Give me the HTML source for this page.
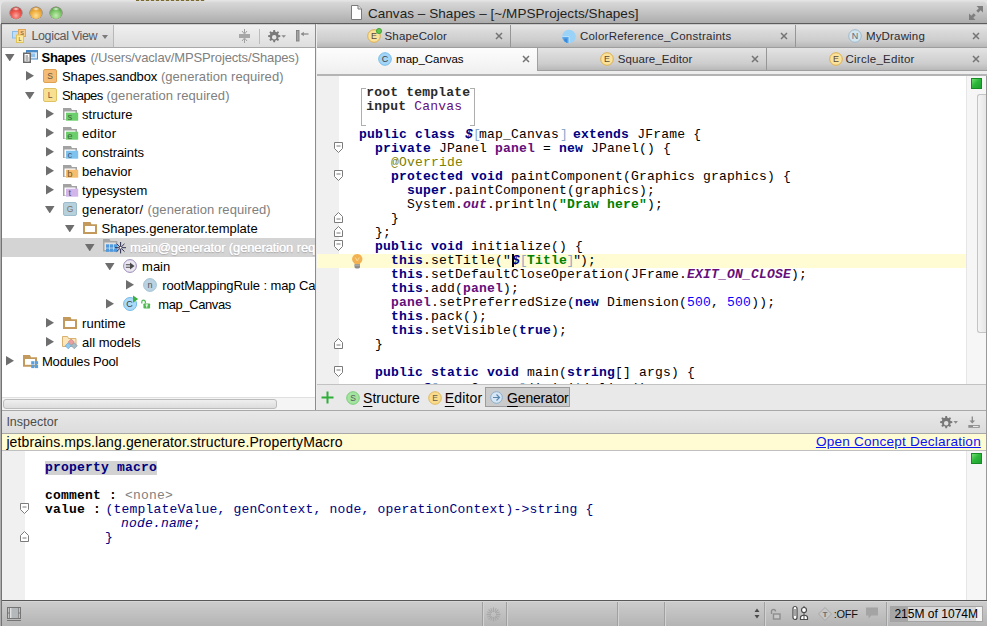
<!DOCTYPE html><html><head><meta charset="utf-8"><title>Canvas - Shapes</title><style>
*{box-sizing:border-box;margin:0;padding:0}
html,body{width:987px;height:626px;overflow:hidden;background:#fff}
body{position:relative;font-family:"Liberation Sans",sans-serif;font-size:13px;color:#000}
.abs{position:absolute}
.t{position:absolute;white-space:nowrap;line-height:1}
.g{color:#808080}
.code{font-family:"Liberation Mono",monospace;font-size:13px;letter-spacing:0.2px;white-space:pre;line-height:14px;position:absolute}
.k{font-weight:bold;color:#000080}
.f{font-weight:bold;color:#660e7a}
.sf{font-weight:bold;font-style:italic;color:#660e7a}
.an{color:#808000}
.s{font-weight:bold;color:#008000}
.n{color:#0000ff}
.b{font-weight:bold}
.m{font-weight:bold;font-style:italic;color:#000080}
.br{color:#8aa9c9}
.db{color:#000080}
u{text-underline-offset:2.500px;text-decoration-thickness:1px}
</style></head><body>
<div class="abs" style="left:0px;top:0px;width:987px;height:626px;background:#e4e4e4"></div>
<div class="abs" style="left:1px;top:1px;width:986px;height:23px;background:linear-gradient(#e2e2e2 0,#d6d6d6 8%,#c4c4c4 50%,#acacac 100%);border-radius:5px 5px 0 0;border-bottom:1px solid #5c5c5c"></div>
<div class="abs" style="left:0px;top:24px;width:1px;height:602px;background:#aeaeae"></div>
<div class="abs" style="left:1px;top:24px;width:1px;height:602px;background:#747474"></div>
<div class="abs" style="left:10px;top:7px;width:12px;height:12px;border-radius:50%;background:radial-gradient(ellipse 3.500px 1.800px at 50% 16%,rgba(255,255,255,.85),rgba(255,255,255,0)),radial-gradient(circle at 50% 72%,#f8a8a4 0,#ee5a50 42%,#d2423a 72%,#7e2a1c 100%);box-shadow:0 0 0 .5px rgba(60,30,20,.55),0 1px 0 rgba(255,255,255,.45)"></div>
<div class="abs" style="left:30px;top:7px;width:12px;height:12px;border-radius:50%;background:radial-gradient(ellipse 3.500px 1.800px at 50% 16%,rgba(255,255,255,.85),rgba(255,255,255,0)),radial-gradient(circle at 50% 72%,#fbe09a 0,#f2b244 42%,#d8962a 72%,#86581a 100%);box-shadow:0 0 0 .5px rgba(60,30,20,.55),0 1px 0 rgba(255,255,255,.45)"></div>
<div class="abs" style="left:50px;top:7px;width:12px;height:12px;border-radius:50%;background:radial-gradient(ellipse 3.500px 1.800px at 50% 16%,rgba(255,255,255,.85),rgba(255,255,255,0)),radial-gradient(circle at 50% 72%,#c4ecb4 0,#84cc70 42%,#5ca84a 72%,#2c6224 100%);box-shadow:0 0 0 .5px rgba(60,30,20,.55),0 1px 0 rgba(255,255,255,.45)"></div>
<div class="abs" style="left:136px;top:0px;width:69px;height:1px;background:repeating-linear-gradient(90deg,#7a6a30 0,#7a6a30 3px,#d0ccc0 3px,#d0ccc0 5px)"></div>
<svg class="abs" style="left:350px;top:5px" width="13" height="15" viewBox="0 0 13 15"><path d="M1.500 .5h6.500l3.500 3.500v10.500h-10z" fill="#fff" stroke="#7a7a7a"/><path d="M8 .5v3.500h3.500" fill="#e8e8e8" stroke="#7a7a7a"/></svg>
<span class="t " style="left:367.9px;top:6.6px;font-size:13.5px;font-weight:normal;color:#1e1e1e;letter-spacing:0.06px;">Canvas – Shapes – [~/MPSProjects/Shapes]</span>
<svg class="abs" style="left:969px;top:6px" width="14" height="14" viewBox="0 0 14 14"><g fill="#7e7e7e"><path d="M7.500 0h6.500v6.500l-2.300-2.300-2.500 2.500-1.900-1.900 2.500-2.500z"/><path d="M6.500 14h-6.500v-6.500l2.300 2.300 2.500-2.500 1.900 1.900-2.500 2.500z"/></g></svg>
<div class="abs" style="left:2px;top:24px;width:314px;height:24px;background:linear-gradient(#b4b4b4 0,#f0f0f0 1px,#efefef 2px,#dedede);border-bottom:1px solid #a8a8a8"></div>
<div class="abs" style="left:2px;top:25px;width:112px;height:22px;background:linear-gradient(#e8e8e8,#d4d4d4);border-right:1px solid #b8b8b8"></div>
<svg class="abs" style="left:12px;top:29px" width="14" height="14" viewBox="0 0 14 14"><rect x=".5" y="2.500" width="6" height="6.500" fill="#c2dcf6" stroke="#8abcea"/><rect x="6.500" y=".5" width="7" height="7" fill="#f8ca8c" stroke="#e0a654"/><rect x="4.500" y="6" width="7" height="7.500" fill="#fbe9a2" stroke="#e0c458"/><text x="10" y="6.300" font-size="5.500" font-family="Liberation Sans, sans-serif" text-anchor="middle" fill="#6a5a30">S</text><text x="8" y="12.300" font-size="5.500" font-family="Liberation Sans, sans-serif" text-anchor="middle" fill="#6a5a30">L</text></svg>
<span class="t " style="left:31.4px;top:30px;font-size:12.5px;font-weight:normal;color:#58585e;letter-spacing:-0.346px;">Logical View</span>
<div class="abs" style="left:102px;top:35px;width:0;height:0;border-left:3px solid transparent;border-right:3px solid transparent;border-top:4px solid #7a7a7a"></div>
<svg class="abs" style="left:239px;top:29px" width="11" height="14" viewBox="0 0 11 14"><rect x="0" y="5" width="11" height="4" fill="#a6a6a6"/><path d="M5.500 0v4M5.500 10v4" stroke="#a0a0a0" stroke-width="1"/><path d="M3 2l2.500 3 2.500-3M3 12l2.500-3 2.500 3" stroke="#a0a0a0" stroke-width="1" fill="none"/></svg>
<div class="abs" style="left:259px;top:29px;width:1px;height:15px;background:#bcbcbc"></div>
<svg class="abs" style="left:267px;top:30px" width="20" height="12.5" viewBox="0 0 20 12.5"><g transform="scale(1.03)"><path d="M6.200 0h1.600l.3 1.700 1.100.45 1.400-1 1.150 1.150-1 1.400.45 1.100 1.700.3v1.600l-1.700.3-.45 1.100 1 1.400-1.150 1.150-1.400-1-1.100.45-.3 1.700h-1.600l-.3-1.700-1.100-.45-1.400 1-1.150-1.150 1-1.400-.45-1.100-1.700-.3v-1.600l1.700-.3.450-1.100-1-1.400 1.150-1.150 1.400 1 1.100-.45zM7 4.800a2.200 2.200 0 1 0 0 4.400 2.200 2.200 0 0 0 0-4.400z" fill="#7a7a7a" fill-rule="evenodd"/></g><path d="M14.400 5.200h4.600l-2.300 2.600z" fill="#8a8a8a"/></svg>
<svg class="abs" style="left:295.5px;top:30px" width="13" height="12" viewBox="0 0 13 12"><rect x=".5" y=".5" width="2.500" height="10.500" fill="#a4a4a4" stroke="#7e7e7e" stroke-width=".9"/><path d="M5.500 4h7" stroke="#8a8a8a" stroke-width="1.300"/><path d="M4.800 4l3-2.300v4.600z" fill="#8a8a8a"/></svg>
<div class="abs" style="left:2px;top:48px;width:313px;height:349px;background:#fff;overflow:hidden">
<div class="abs" style="left:0;top:190px;width:313px;height:19px;background:#d4d4d4"></div>
<svg class="abs" style="left:3.0500000000000007px;top:5.5px" width="9.500" height="7.500" viewBox="0 0 9.500 7.500"><path d="M0 0h9.500l-4.750 7.500z" fill="#6e6e6e"/></svg>
<svg class="abs" style="left:21px;top:2.0px" width="15" height="13" viewBox="0 0 15 13"><rect x="3.500" y=".5" width="11" height="8.500" fill="#d6e8f8" stroke="#4a8ac8"/><rect x="3.500" y=".5" width="11" height="1.800" fill="#4a8ac8"/><rect x="7.500" y="3.500" width="4.500" height="3.500" fill="#8ec2f0"/><rect x="0" y="2.500" width="8" height="10.500" fill="#6a6a6a"/><rect x="1.500" y="4" width="5" height="7.500" fill="#fff"/><path d="M2.500 6h2.500M2.500 8h3M2.500 10h3" stroke="#6a6a6a"/></svg>
<span class="t " style="left:39.6px;top:3px;font-size:13px;font-weight:bold;color:#000;letter-spacing:-0.375px;">Shapes</span>
<span class="t " style="left:88.4px;top:3px;font-size:13px;font-weight:normal;color:#808080;letter-spacing:-0.136px;">(/Users/vaclav/MPSProjects/Shapes)</span>
<svg class="abs" style="left:24px;top:23.25px" width="8" height="9.500" viewBox="0 0 8 9.500"><path d="M0 0v9.500l8-4.750z" fill="#6e6e6e"/></svg>
<svg class="abs" style="left:41px;top:21.0px" width="14" height="14" viewBox="0 0 14 14"><rect x=".5" y=".5" width="13" height="13" rx="1.500" fill="#f4bc74" stroke="#e0a252"/><text x="7" y="10" font-size="8.500" font-family="Liberation Sans, sans-serif" text-anchor="middle" fill="#6a5a40">S</text></svg>
<span class="t " style="left:60.0px;top:22px;font-size:13px;font-weight:normal;color:#000;letter-spacing:-0.119px;">Shapes.sandbox</span>
<span class="t " style="left:158.9px;top:22px;font-size:13px;font-weight:normal;color:#808080;letter-spacing:0.062px;">(generation required)</span>
<svg class="abs" style="left:23.05px;top:43.5px" width="9.500" height="7.500" viewBox="0 0 9.500 7.500"><path d="M0 0h9.500l-4.750 7.500z" fill="#6e6e6e"/></svg>
<svg class="abs" style="left:41px;top:40.0px" width="14" height="14" viewBox="0 0 14 14"><rect x=".5" y=".5" width="13" height="13" rx="1.500" fill="#f8e092" stroke="#e0c262"/><text x="7" y="10" font-size="8.500" font-family="Liberation Sans, sans-serif" text-anchor="middle" fill="#6a5a40">L</text></svg>
<span class="t " style="left:60.0px;top:41px;font-size:13px;font-weight:normal;color:#000;letter-spacing:-0.582px;">Shapes</span>
<span class="t " style="left:104.4px;top:41px;font-size:13px;font-weight:normal;color:#808080;letter-spacing:0.085px;">(generation required)</span>
<svg class="abs" style="left:44.1px;top:61.25px" width="8" height="9.500" viewBox="0 0 8 9.500"><path d="M0 0v9.500l8-4.750z" fill="#6e6e6e"/></svg>
<svg class="abs" style="left:61px;top:59.7px" width="16" height="13" viewBox="0 0 16 13"><path d="M0 0h8l1 2h5v10h-14z" fill="#a2a2a2"/><rect x="1.500" y="3.500" width="11" height="8" fill="#fff"/><rect x="3" y="4.700" width="12.200" height="8" fill="#6ccf6c"/><text x="6.800" y="12" font-size="9.500" font-family="Liberation Sans, sans-serif" text-anchor="middle" fill="#3c6a3c">s</text></svg>
<span class="t " style="left:80.1px;top:60px;font-size:13px;font-weight:normal;color:#000;letter-spacing:-0.009px;">structure</span>
<svg class="abs" style="left:44.1px;top:80.25px" width="8" height="9.500" viewBox="0 0 8 9.500"><path d="M0 0v9.500l8-4.750z" fill="#6e6e6e"/></svg>
<svg class="abs" style="left:61px;top:78.7px" width="16" height="13" viewBox="0 0 16 13"><path d="M0 0h8l1 2h5v10h-14z" fill="#a2a2a2"/><rect x="1.500" y="3.500" width="11" height="8" fill="#fff"/><rect x="3" y="4.700" width="12.200" height="8" fill="#6ccf6c"/><text x="6.800" y="12" font-size="9.500" font-family="Liberation Sans, sans-serif" text-anchor="middle" fill="#3c6a3c">e</text></svg>
<span class="t " style="left:80.1px;top:79px;font-size:13px;font-weight:normal;color:#000;letter-spacing:0.295px;">editor</span>
<svg class="abs" style="left:44.1px;top:99.25px" width="8" height="9.500" viewBox="0 0 8 9.500"><path d="M0 0v9.500l8-4.750z" fill="#6e6e6e"/></svg>
<svg class="abs" style="left:61px;top:97.7px" width="16" height="13" viewBox="0 0 16 13"><path d="M0 0h8l1 2h5v10h-14z" fill="#a2a2a2"/><rect x="1.500" y="3.500" width="11" height="8" fill="#fff"/><rect x="3" y="4.700" width="12.200" height="8" fill="#80c2ee"/><text x="6.800" y="12" font-size="9.500" font-family="Liberation Sans, sans-serif" text-anchor="middle" fill="#3a5a7a">c</text></svg>
<span class="t " style="left:80.1px;top:98px;font-size:13px;font-weight:normal;color:#000;letter-spacing:-0.098px;">constraints</span>
<svg class="abs" style="left:44.1px;top:118.25px" width="8" height="9.500" viewBox="0 0 8 9.500"><path d="M0 0v9.500l8-4.750z" fill="#6e6e6e"/></svg>
<svg class="abs" style="left:61px;top:116.7px" width="16" height="13" viewBox="0 0 16 13"><path d="M0 0h8l1 2h5v10h-14z" fill="#a2a2a2"/><rect x="1.500" y="3.500" width="11" height="8" fill="#fff"/><rect x="3" y="4.700" width="12.200" height="8" fill="#f6be6c"/><text x="6.800" y="12" font-size="9.500" font-family="Liberation Sans, sans-serif" text-anchor="middle" fill="#7a5a2c">b</text></svg>
<span class="t " style="left:80.1px;top:117px;font-size:13px;font-weight:normal;color:#000;letter-spacing:-0.009px;">behavior</span>
<svg class="abs" style="left:44.1px;top:137.25px" width="8" height="9.500" viewBox="0 0 8 9.500"><path d="M0 0v9.500l8-4.750z" fill="#6e6e6e"/></svg>
<svg class="abs" style="left:61px;top:135.7px" width="16" height="13" viewBox="0 0 16 13"><path d="M0 0h8l1 2h5v10h-14z" fill="#a2a2a2"/><rect x="1.500" y="3.500" width="11" height="8" fill="#fff"/><rect x="3" y="4.700" width="12.200" height="8" fill="#d2b6ea"/><text x="6.800" y="12" font-size="9.500" font-family="Liberation Sans, sans-serif" text-anchor="middle" fill="#5a4a7a">t</text></svg>
<span class="t " style="left:80.1px;top:136px;font-size:13px;font-weight:normal;color:#000;letter-spacing:-0.065px;">typesystem</span>
<svg class="abs" style="left:43.45px;top:157.5px" width="9.500" height="7.500" viewBox="0 0 9.500 7.500"><path d="M0 0h9.500l-4.750 7.500z" fill="#6e6e6e"/></svg>
<svg class="abs" style="left:61px;top:154.0px" width="14" height="14" viewBox="0 0 14 14"><rect x=".5" y=".5" width="13" height="13" rx="1.500" fill="#b6d0dc" stroke="#9cbccc"/><text x="7" y="10" font-size="8.500" font-family="Liberation Sans, sans-serif" text-anchor="middle" fill="#7a7068">G</text></svg>
<span class="t " style="left:80.1px;top:155px;font-size:13px;font-weight:normal;color:#000;letter-spacing:0.193px;">generator/</span>
<span class="t " style="left:145.6px;top:155px;font-size:13px;font-weight:normal;color:#808080;letter-spacing:0.081px;">(generation required)</span>
<svg class="abs" style="left:63.05px;top:176.5px" width="9.500" height="7.500" viewBox="0 0 9.500 7.500"><path d="M0 0h9.500l-4.750 7.500z" fill="#6e6e6e"/></svg>
<svg class="abs" style="left:81px;top:174.0px" width="14" height="12" viewBox="0 0 14 12"><path d="M0 0h7.500l1 2.200h5.500v9.800h-14z" fill="#c49a5c"/><rect x="2" y="4" width="10" height="6" fill="#fff"/></svg>
<span class="t " style="left:99.5px;top:174px;font-size:13px;font-weight:normal;color:#000;letter-spacing:0.004px;">Shapes.generator.template</span>
<svg class="abs" style="left:83.25px;top:195.5px" width="9.500" height="7.500" viewBox="0 0 9.500 7.500"><path d="M0 0h9.500l-4.750 7.500z" fill="#6e6e6e"/></svg>
<svg class="abs" style="left:101px;top:191.0px" width="23" height="15" viewBox="0 0 23 15"><path d="M0 0h6.500l1 2h6.800v10.500h-14.300z" fill="#a6a6a6"/><rect x="1.500" y="3.500" width="11.300" height="7.500" fill="#e2e2e2"/><g fill="#4f9ade"><rect x="3" y="5.300" width="3.300" height="3.400"/><rect x="7" y="5.300" width="3.300" height="3.400"/><rect x="11" y="5.300" width="3.300" height="3.400"/><rect x="3" y="9.400" width="3.300" height="3.400"/><rect x="7" y="9.400" width="3.300" height="3.400"/><rect x="11" y="9.400" width="3.300" height="3.400"/></g><g stroke="#1c1c44" stroke-width=".9"><path d="M17.600 3v11.400M12 8.700h11.200M13.700 4.800l7.800 7.800M21.500 4.800l-7.800 7.800"/></g><circle cx="17.600" cy="8.700" r="1" fill="#fff"/></svg>
<span class="t " style="left:128.1px;top:193px;font-size:13px;font-weight:normal;color:#fff;letter-spacing:-0.126px;text-shadow:0 0 .7px #fff,0 1px 1px rgba(120,120,120,.5);">main@generator (generation required)</span>
<svg class="abs" style="left:103.05px;top:214.5px" width="9.500" height="7.500" viewBox="0 0 9.500 7.500"><path d="M0 0h9.500l-4.750 7.500z" fill="#6e6e6e"/></svg>
<svg class="abs" style="left:121px;top:211.2px" width="14" height="14" viewBox="0 0 14 14"><circle cx="7" cy="7" r="6.400" fill="#ebe8f2" stroke="#9a8aba"/><path d="M2.800 5.700h5M2.800 8.300h5" stroke="#4a4a4a" stroke-width="1.100" fill="none"/><path d="M7 3.500l4.500 3.500-4.500 3.500z" fill="#4a4a4a"/></svg>
<span class="t " style="left:140.1px;top:212px;font-size:13px;font-weight:normal;color:#000;letter-spacing:-0.022px;">main</span>
<svg class="abs" style="left:124.1px;top:232.25px" width="8" height="9.500" viewBox="0 0 8 9.500"><path d="M0 0v9.500l8-4.750z" fill="#6e6e6e"/></svg>
<svg class="abs" style="left:141px;top:230.0px" width="14" height="14" viewBox="0 0 14 14"><circle cx="7" cy="7" r="6.400" fill="#bad2e2" stroke="#a2c2d6"/><text x="7" y="9.800" font-size="9" font-family="Liberation Sans, sans-serif" text-anchor="middle" fill="#555">n</text></svg>
<span class="t " style="left:160.2px;top:231px;font-size:13px;font-weight:normal;color:#000;letter-spacing:-0.087px;">rootMappingRule : map Canvas</span>
<svg class="abs" style="left:104px;top:251.25px" width="8" height="9.500" viewBox="0 0 8 9.500"><path d="M0 0v9.500l8-4.750z" fill="#6e6e6e"/></svg>
<svg class="abs" style="left:121px;top:247.0px" width="28" height="16" viewBox="0 0 28 16"><circle cx="7.100" cy="9" r="6.500" fill="#aadaf8" stroke="#72bae8"/><text x="6.500" y="12" font-size="9" font-family="Liberation Sans, sans-serif" text-anchor="middle" fill="#404040">C</text><path d="M10 .5v7.200l5.200-3.600z" fill="#3cb03c"/><rect x="20.400" y="8.400" width="6.700" height="5.200" rx=".8" fill="#52b852"/><path d="M23.750 9.600v3M22.500 10h2.500" stroke="#fff" stroke-width="1"/><path d="M18.800 8.500v-1.500a1.800 1.800 0 0 1 3.600 0v1.500" fill="none" stroke="#52b852" stroke-width="1.200"/></svg>
<span class="t " style="left:156.3px;top:250px;font-size:13px;font-weight:normal;color:#000;letter-spacing:-0.411px;">map_Canvas</span>
<svg class="abs" style="left:44.1px;top:270.25px" width="8" height="9.500" viewBox="0 0 8 9.500"><path d="M0 0v9.500l8-4.750z" fill="#6e6e6e"/></svg>
<svg class="abs" style="left:61px;top:269.0px" width="14" height="12" viewBox="0 0 14 12"><path d="M0 0h7.500l1 2.200h5.500v9.800h-14z" fill="#c49a5c"/><rect x="2" y="4" width="10" height="6" fill="#fff"/></svg>
<span class="t " style="left:80.1px;top:269px;font-size:13px;font-weight:normal;color:#000;letter-spacing:-0.008px;">runtime</span>
<svg class="abs" style="left:44.1px;top:289.25px" width="8" height="9.500" viewBox="0 0 8 9.500"><path d="M0 0v9.500l8-4.750z" fill="#6e6e6e"/></svg>
<svg class="abs" style="left:60.3px;top:287.5px" width="16" height="14" viewBox="0 0 16 14"><path d="M.5 10.500v-10h5l1 2h7.500v8z" fill="#fbe6bc" stroke="#d8b070"/><path d="M9.200 3l3 3-3 3-3-3z" fill="#e8a0a0" stroke="#c07878" stroke-width=".6"/><path d="M6.200 6.800l3 3-3 3-3-3z" fill="#8ccaf0" stroke="#5a9ad0" stroke-width=".6"/><path d="M12.300 6.800l3 3-3 3-3-3z" fill="#a8bcc8" stroke="#7890a0" stroke-width=".6"/></svg>
<span class="t " style="left:80.1px;top:288px;font-size:13px;font-weight:normal;color:#000;letter-spacing:-0.003px;">all models</span>
<svg class="abs" style="left:4.199999999999999px;top:308.25px" width="8" height="9.500" viewBox="0 0 8 9.500"><path d="M0 0v9.500l8-4.750z" fill="#6e6e6e"/></svg>
<svg class="abs" style="left:21px;top:306.8px" width="16" height="14" viewBox="0 0 16 14"><path d="M0 0h7l1 2.200h6v9.600h-14z" fill="#c49a5c"/><rect x="2" y="4" width="10" height="5.800" fill="#fff"/><g fill="#5aa0dc"><rect x="8.200" y="6.200" width="3.200" height="3.200"/><rect x="11.900" y="6.200" width="3.200" height="3.200"/><rect x="8.200" y="9.900" width="3.200" height="3.200"/><rect x="11.900" y="9.900" width="3.200" height="3.200"/></g></svg>
<span class="t " style="left:40.0px;top:307px;font-size:13px;font-weight:normal;color:#000;letter-spacing:-0.207px;">Modules Pool</span>
</div>
<div class="abs" style="left:2px;top:397px;width:313px;height:13px;background:#f5f5f5;border-top:1px solid #e0e0e0"></div>
<div class="abs" style="left:3px;top:399px;width:274px;height:10px;border-radius:3px;background:linear-gradient(#efefef,#dddddd);border:1px solid #bcbcbc"></div>
<div class="abs" style="left:315px;top:24px;width:1px;height:386px;background:#8c8c8c"></div>
<div class="abs" style="left:316px;top:24px;width:1px;height:386px;background:#ececec"></div>
<div class="abs" style="left:317px;top:24px;width:670px;height:24px;background:linear-gradient(#b0b0b0 0,#e6e6e6 1px,#e4e4e4 2px,#d8d8d8 35%,#cdcdcd 72%,#b8b8b8);border-bottom:1px solid #9e9e9e"></div>
<div class="abs" style="left:510px;top:25px;width:1px;height:22px;background:#969696"></div>
<div class="abs" style="left:795px;top:25px;width:1px;height:22px;background:#969696"></div>
<svg class="abs" style="left:367px;top:27px" width="16" height="16" viewBox="0 0 16 16"><circle cx="7" cy="9" r="6.300" fill="#fae29a" stroke="#dcae50"/><text x="7" y="12" font-size="9" font-family="Liberation Sans, sans-serif" text-anchor="middle" fill="#5a4a3a">E</text><circle cx="12" cy="4" r="2.600" fill="#62c64e" stroke="#3a9a2a" stroke-width=".8"/></svg>
<span class="t " style="left:384.5px;top:31px;font-size:11.5px;font-weight:normal;color:#2a2a34;letter-spacing:0.177px;">ShapeColor</span>
<svg class="abs" style="left:495px;top:31.700000000000003px" width="8" height="8" viewBox="0 0 8 8"><path d="M1 1l6 6M7 1l-6 6" stroke="#747474" stroke-width="1.500"/></svg>
<svg class="abs" style="left:561.5px;top:28.5px" width="15" height="15" viewBox="0 0 15 15"><circle cx="7" cy="7.500" r="6.800" fill="#9ad2f8"/><path d="M.2 7.500h6.800v6.800a6.800 6.800 0 0 1-6.800-6.800z" fill="#5aa8ea"/><path d="M2.300 9.600h2.900v4.400a6.800 6.800 0 0 1-2.900-2.400z" fill="#3a8ada"/><path d="M.2 7.500h6.800v6.800" stroke="#d8ecfc" stroke-width=".7" fill="none"/></svg>
<span class="t " style="left:579.9px;top:31px;font-size:11.5px;font-weight:normal;color:#2a2a34;letter-spacing:0.253px;">ColorReference_Constraints</span>
<svg class="abs" style="left:779.5px;top:31.700000000000003px" width="8" height="8" viewBox="0 0 8 8"><path d="M1 1l6 6M7 1l-6 6" stroke="#747474" stroke-width="1.500"/></svg>
<svg class="abs" style="left:848px;top:27px" width="16" height="16" viewBox="0 0 16 16"><circle cx="7" cy="9" r="6.300" fill="#d2e4ee" stroke="#9ebace"/><text x="7" y="12" font-size="9" font-family="Liberation Sans, sans-serif" text-anchor="middle" fill="#5a6a7a">N</text></svg>
<span class="t " style="left:865.9px;top:31px;font-size:11.5px;font-weight:normal;color:#2a2a34;letter-spacing:0.176px;">MyDrawing</span>
<svg class="abs" style="left:971.8px;top:31.700000000000003px" width="8" height="8" viewBox="0 0 8 8"><path d="M1 1l6 6M7 1l-6 6" stroke="#747474" stroke-width="1.500"/></svg>
<div class="abs" style="left:317px;top:48px;width:670px;height:28px;background:linear-gradient(#fafafa,#ececec);border-bottom:2px solid #b4b4b4"></div>
<div class="abs" style="left:537px;top:48px;width:450px;height:23px;background:linear-gradient(#e4e4e4,#d8d8d8 35%,#cdcdcd 72%,#b8b8b8);border-bottom:1px solid #a0a0a0;border-left:1px solid #a0a0a0"></div>
<div class="abs" style="left:317px;top:48px;width:220px;height:26px;background:linear-gradient(#fdfdfd,#efefef)"></div>
<div class="abs" style="left:766px;top:48px;width:1px;height:22px;background:#969696"></div>
<svg class="abs" style="left:378px;top:50px" width="16" height="16" viewBox="0 0 16 16"><circle cx="7" cy="9" r="6.300" fill="#a2d5f8" stroke="#78bce8"/><text x="7" y="12" font-size="9" font-family="Liberation Sans, sans-serif" text-anchor="middle" fill="#404040">C</text></svg>
<span class="t " style="left:396.1px;top:54px;font-size:11.5px;font-weight:normal;color:#000;letter-spacing:-0.027px;">map_Canvas</span>
<svg class="abs" style="left:522px;top:54.7px" width="8" height="8" viewBox="0 0 8 8"><path d="M1 1l6 6M7 1l-6 6" stroke="#747474" stroke-width="1.500"/></svg>
<svg class="abs" style="left:600px;top:50px" width="16" height="16" viewBox="0 0 16 16"><circle cx="7" cy="9" r="6.300" fill="#fae29a" stroke="#dcae50"/><text x="7" y="12" font-size="9" font-family="Liberation Sans, sans-serif" text-anchor="middle" fill="#5a4a3a">E</text></svg>
<span class="t " style="left:617.7px;top:54px;font-size:11.5px;font-weight:normal;color:#2a2a34;letter-spacing:0.098px;">Square_Editor</span>
<svg class="abs" style="left:750.5px;top:54.7px" width="8" height="8" viewBox="0 0 8 8"><path d="M1 1l6 6M7 1l-6 6" stroke="#747474" stroke-width="1.500"/></svg>
<svg class="abs" style="left:828.5px;top:50px" width="16" height="16" viewBox="0 0 16 16"><circle cx="7" cy="9" r="6.300" fill="#fae29a" stroke="#dcae50"/><text x="7" y="12" font-size="9" font-family="Liberation Sans, sans-serif" text-anchor="middle" fill="#5a4a3a">E</text></svg>
<span class="t " style="left:845.4px;top:54px;font-size:11.5px;font-weight:normal;color:#2a2a34;letter-spacing:0.267px;">Circle_Editor</span>
<svg class="abs" style="left:971.8px;top:54.7px" width="8" height="8" viewBox="0 0 8 8"><path d="M1 1l6 6M7 1l-6 6" stroke="#747474" stroke-width="1.500"/></svg>
<div class="abs" style="left:317px;top:76px;width:670px;height:308px;background:#fff;overflow:hidden">
<div class="abs" style="left:0px;top:0px;width:22px;height:308px;background:#f0f0f0"></div>
<div class="abs" style="left:0px;top:178px;width:649px;height:14px;background:#fffbd3"></div>
<div class="abs" style="left:649px;top:0px;width:21px;height:308px;background:#f6f6f6;border-left:1px solid #e6e6e6"></div>
<div class="abs" style="left:654px;top:2px;width:11px;height:11px;background:linear-gradient(135deg,#74e074 0,#2cb83a 45%,#1ea030);border:1px solid #168a24"></div>
<div class="abs" style="left:660px;top:18px;width:10px;height:239px;background:linear-gradient(90deg,#f4f4f4,#e4e4e4);border:1px solid #c4c4c4;border-right:none;border-radius:3px 0 0 3px"></div>
<div class="abs" style="left:44px;top:12px;width:5px;height:38px;border:1.300px solid #aeaeae;border-right:none"></div>
<div class="abs" style="left:153px;top:12px;width:5px;height:38px;border:1.300px solid #aeaeae;border-left:none"></div>
<div class="code" style="left:49.30000000000001px;top:10px"><span class="b" style="color:#2a2a2a">root template</span></div>
<div class="code" style="left:49.30000000000001px;top:24px"><span class="b" style="color:#2a2a2a">input</span> <span style="color:#660e7a">Canvas</span></div>
<div class="code" style="left:42px;top:52px"><span class="k">public class</span> <span class="m" style="margin-left:2px">$</span><span class="br">[</span><span style="margin-left:-2px">map_Canvas</span><span class="br" style="margin-left:1px">]</span><span style="margin-left:-3px"> </span><span class="k">extends</span> JFrame <span style="margin-left:0px">{</span></div>
<div class="code" style="left:58px;top:66px"><span class="k">private</span> JPanel <span class="f">panel</span> = <span class="k">new</span> JPanel() {</div>
<div class="code" style="left:74px;top:80px"><span class="an">@Override</span></div>
<div class="code" style="left:74px;top:94px"><span class="k">protected void</span> paintComponent(Graphics graphics) {</div>
<div class="code" style="left:90px;top:108px"><span class="k">super</span>.paintComponent(graphics);</div>
<div class="code" style="left:90px;top:122px">System.<span class="sf">out</span>.println(<span class="s">"Draw here"</span>);</div>
<div class="code" style="left:74px;top:136px">}</div>
<div class="code" style="left:58px;top:150px">};</div>
<div class="code" style="left:58px;top:164px"><span class="k">public void</span> initialize() {</div>
<div class="code" style="left:74px;top:178px"><span class="k">this</span>.setTitle("<span class="m" style="margin-left:1px">$</span><span class="br" style="margin-left:-.4px">[</span><span class="s" style="margin-left:-.7px">Title</span><span class="br" style="margin-left:-.5px">]</span><span style="margin-left:-1.200px">"</span><span style="margin-left:-1.300px">);</span></div>
<div class="code" style="left:74px;top:192px"><span class="k">this</span>.setDefaultCloseOperation(JFrame.<span class="sf">EXIT_ON_CLOSE</span>);</div>
<div class="code" style="left:74px;top:206px"><span class="k">this</span>.add(<span class="f">panel</span>);</div>
<div class="code" style="left:74px;top:220px"><span class="f">panel</span>.setPreferredSize(<span class="k">new</span> Dimension(<span class="n">500</span>, <span class="n">500</span>));</div>
<div class="code" style="left:74px;top:234px"><span class="k">this</span>.pack();</div>
<div class="code" style="left:74px;top:248px"><span class="k">this</span>.setVisible(<span class="k">true</span>);</div>
<div class="code" style="left:58px;top:262px">}</div>
<div class="code" style="left:58px;top:290px"><span class="k">public static void</span> main(<span class="k">string</span>[] args) {</div>
<div class="code" style="left:74px;top:306px"><span class="k">new</span> <span class="m">$</span><span class="br">[</span>map_Canvas<span class="br">]</span>().initialize();</div>
<svg class="abs" style="left:17px;top:66px" width="9" height="11" viewBox="0 0 9 11"><path d="M.5 .5h8v6l-4 4-4-4z" fill="#fff" stroke="#7c7c7c"/><path d="M2.500 4h4" stroke="#7c7c7c"/></svg>
<svg class="abs" style="left:17px;top:94px" width="9" height="11" viewBox="0 0 9 11"><path d="M.5 .5h8v6l-4 4-4-4z" fill="#fff" stroke="#7c7c7c"/><path d="M2.500 4h4" stroke="#7c7c7c"/></svg>
<svg class="abs" style="left:17px;top:136px" width="9" height="11" viewBox="0 0 9 11"><path d="M.5 10.500h8v-6l-4-4-4 4z" fill="#fff" stroke="#7c7c7c"/><path d="M2.500 7h4" stroke="#7c7c7c"/></svg>
<svg class="abs" style="left:17px;top:150px" width="9" height="11" viewBox="0 0 9 11"><path d="M.5 10.500h8v-6l-4-4-4 4z" fill="#fff" stroke="#7c7c7c"/><path d="M2.500 7h4" stroke="#7c7c7c"/></svg>
<svg class="abs" style="left:17px;top:164px" width="9" height="11" viewBox="0 0 9 11"><path d="M.5 .5h8v6l-4 4-4-4z" fill="#fff" stroke="#7c7c7c"/><path d="M2.500 4h4" stroke="#7c7c7c"/></svg>
<svg class="abs" style="left:17px;top:262px" width="9" height="11" viewBox="0 0 9 11"><path d="M.5 10.500h8v-6l-4-4-4 4z" fill="#fff" stroke="#7c7c7c"/><path d="M2.500 7h4" stroke="#7c7c7c"/></svg>
<svg class="abs" style="left:17px;top:290px" width="9" height="11" viewBox="0 0 9 11"><path d="M.5 .5h8v6l-4 4-4-4z" fill="#fff" stroke="#7c7c7c"/><path d="M2.500 4h4" stroke="#7c7c7c"/></svg>
<div class="abs" style="left:195px;top:178px;width:2px;height:13px;background:#000"></div>
<svg class="abs" style="left:35px;top:178px" width="10.500" height="15" viewBox="0 0 10.500 15"><path d="M5.250 0a5.100 5.100 0 0 1 3.300 9c-.6.600-.8 1-.8 1.500h-5c0-.5-.2-.9-.8-1.500a5.100 5.100 0 0 1 3.300-9z" fill="#f2b254"/><path d="M3.300 3.500l2 3.500 2-3.500" stroke="#fadc9a" stroke-width=".9" fill="none"/><path d="M2.500 10.300h5.500v2.700c0 2-5.500 2-5.500 0z" fill="#8c8c8c"/><path d="M2.500 11.600h5.500" stroke="#b0b0b0" stroke-width=".8"/></svg>
</div>
<div class="abs" style="left:317px;top:384px;width:670px;height:26px;background:#e9e9e9;border-top:1px solid #c2c2c2"></div>
<svg class="abs" style="left:321px;top:391px" width="13" height="13" viewBox="0 0 13 13"><path d="M6.500 .5v12M.5 6.500h12" stroke="#2fae3a" stroke-width="2"/></svg>
<svg class="abs" style="left:346px;top:390.5px" width="14" height="14" viewBox="0 0 14 14"><circle cx="7" cy="7" r="6.300" fill="#a2e4a0" stroke="#7ccc7a"/><text x="7" y="10" font-size="8.500" font-family="Liberation Sans, sans-serif" text-anchor="middle" fill="#5a5a5a">S</text></svg>
<span class="t " style="left:363.1px;top:391px;font-size:14px;font-weight:normal;color:#000;letter-spacing:-0.024px;"><u>S</u>tructure</span>
<svg class="abs" style="left:428px;top:390.5px" width="14" height="14" viewBox="0 0 14 14"><circle cx="7" cy="7" r="6.300" fill="#f8dc8c" stroke="#e0b860"/><text x="7" y="10" font-size="8.500" font-family="Liberation Sans, sans-serif" text-anchor="middle" fill="#6a5a4a">E</text></svg>
<span class="t " style="left:444.8px;top:391px;font-size:14px;font-weight:normal;color:#000;letter-spacing:0.17px;"><u>E</u>ditor</span>
<div class="abs" style="left:485px;top:387px;width:85px;height:20px;background:#cbcbcb;border:1px solid #9c9c9c"></div>
<svg class="abs" style="left:490px;top:391px" width="13" height="13" viewBox="0 0 13 13"><circle cx="6.500" cy="6.500" r="5.800" fill="#d6e6f4" stroke="#8ab0d0"/><path d="M3 6.500h6M6.500 3.500l3 3-3 3" stroke="#5a86b0" stroke-width="1.200" fill="none"/></svg>
<span class="t " style="left:507.1px;top:391px;font-size:14px;font-weight:normal;color:#000;letter-spacing:-0.183px;"><u>G</u>enerator</span>
<div class="abs" style="left:2px;top:410px;width:985px;height:1px;background:#a8a8a8"></div>
<div class="abs" style="left:2px;top:411px;width:985px;height:23px;background:linear-gradient(#e8e8e8,#dcdcdc);border-bottom:1px solid #a8a8a8"></div>
<span class="t " style="left:6.4px;top:416px;font-size:12.5px;font-weight:normal;color:#4c4c4c;letter-spacing:-0.002px;">Inspector</span>
<svg class="abs" style="left:939.2px;top:416px" width="22" height="14" viewBox="0 0 22 14"><g transform="scale(1.03)"><path d="M6.200 0h1.600l.3 1.700 1.100.45 1.400-1 1.150 1.150-1 1.400.45 1.100 1.700.3v1.600l-1.700.3-.45 1.100 1 1.400-1.150 1.150-1.400-1-1.100.45-.3 1.700h-1.600l-.3-1.700-1.100-.45-1.400 1-1.150-1.150 1-1.400-.45-1.100-1.700-.3v-1.600l1.700-.3.450-1.100-1-1.400 1.150-1.150 1.400 1 1.100-.45zM7 4.800a2.200 2.200 0 1 0 0 4.400 2.200 2.200 0 0 0 0-4.400z" fill="#787878" fill-rule="evenodd"/></g><path d="M14.500 5h4.400l-2.200 2.800z" fill="#8a8a8a"/></svg>
<svg class="abs" style="left:967px;top:414px" width="14" height="15" viewBox="0 0 14 15"><path d="M5.300 2.500v6" stroke="#8a8a8a" stroke-width="1.300" fill="none"/><path d="M2.500 6.500h5.600l-2.800 3z" fill="#8a8a8a"/><rect x="1.300" y="11" width="11.500" height="2.800" fill="#8e8e8e"/><rect x="6" y="11.900" width="5.500" height="1" fill="#f0f0f0"/></svg>
<div class="abs" style="left:2px;top:434px;width:985px;height:17px;background:#fffbd2;border-bottom:1px solid #c0c0c0"></div>
<span class="t " style="left:6.4px;top:435px;font-size:14px;font-weight:normal;color:#000;letter-spacing:0.105px;">jetbrains.mps.lang.generator.structure.PropertyMacro</span>
<span class="t " style="left:815.9px;top:435px;font-size:13.6px;font-weight:normal;color:#0a14f5;letter-spacing:0.2px;text-decoration:underline;">Open Concept Declaration</span>
<div class="abs" style="left:2px;top:451px;width:985px;height:149px;background:#fff"></div>
<div class="abs" style="left:2px;top:451px;width:23px;height:149px;background:#f0f0f0"></div>
<div class="abs" style="left:966px;top:451px;width:21px;height:149px;background:#f6f6f6;border-left:1px solid #e6e6e6"></div>
<div class="abs" style="left:971px;top:453px;width:11px;height:11px;background:linear-gradient(135deg,#74e074 0,#2cb83a 45%,#1ea030);border:1px solid #168a24"></div>
<div class="abs" style="left:45px;top:460.5px;width:112px;height:14.5px;background:#d2d2d2"></div>
<div class="code" style="left:45px;top:461px"><span class="k">property macro</span></div>
<div class="code" style="left:45px;top:489px"><span class="b">comment :</span> <span class="g">&lt;none&gt;</span></div>
<div class="code" style="left:45px;top:503px"><span class="b">value :</span> <span class="db" style="margin-left:-3.5px">(templateValue, genContext, node, operationContext)-&gt;string {</span></div>
<div class="code" style="left:121px;top:517px"><span class="db" style="font-style:italic">node.name</span><span class="db">;</span></div>
<div class="code" style="left:105px;top:531px"><span class="db">}</span></div>
<svg class="abs" style="left:20px;top:503px" width="9" height="11" viewBox="0 0 9 11"><path d="M.5 .5h8v6l-4 4-4-4z" fill="#fff" stroke="#7c7c7c"/><path d="M2.500 4h4" stroke="#7c7c7c"/></svg>
<svg class="abs" style="left:20px;top:531px" width="9" height="11" viewBox="0 0 9 11"><path d="M.5 10.500h8v-6l-4-4-4 4z" fill="#fff" stroke="#7c7c7c"/><path d="M2.500 7h4" stroke="#7c7c7c"/></svg>
<div class="abs" style="left:2px;top:600px;width:985px;height:26px;background:linear-gradient(#cdcdcd,#b4b4b4);border-top:1px solid #585858"></div>
<div class="abs" style="left:2px;top:601px;width:985px;height:1px;background:#d6d6d6"></div>
<svg class="abs" style="left:7px;top:607px" width="14" height="15" viewBox="0 0 14 15"><rect x=".5" y=".5" width="13" height="11" fill="#c2c2c2" stroke="#757575"/><path d="M2.700 .5v11M11.300 .5v11M.5 6h2.200M11.300 6h2.200" stroke="#757575" stroke-width=".9"/><rect x="3.200" y="1" width="7.600" height="10" fill="#b4b8ba"/><rect x="3.200" y="1" width="1.100" height="10" fill="#ececec"/><path d="M0 13.500h14" stroke="#757575"/></svg>
<div class="abs" style="left:481.7px;top:602px;width:1px;height:24px;background:#a0a0a0"></div>
<div class="abs" style="left:482.7px;top:602px;width:1px;height:24px;background:#d2d2d2"></div>
<div class="abs" style="left:505.7px;top:602px;width:1px;height:24px;background:#a0a0a0"></div>
<div class="abs" style="left:506.7px;top:602px;width:1px;height:24px;background:#d2d2d2"></div>
<div class="abs" style="left:617.2px;top:602px;width:1px;height:24px;background:#a0a0a0"></div>
<div class="abs" style="left:618.2px;top:602px;width:1px;height:24px;background:#d2d2d2"></div>
<div class="abs" style="left:664.2px;top:602px;width:1px;height:24px;background:#a0a0a0"></div>
<div class="abs" style="left:665.2px;top:602px;width:1px;height:24px;background:#d2d2d2"></div>
<div class="abs" style="left:764.2px;top:602px;width:1px;height:24px;background:#a0a0a0"></div>
<div class="abs" style="left:765.2px;top:602px;width:1px;height:24px;background:#d2d2d2"></div>
<div class="abs" style="left:885.7px;top:602px;width:1px;height:24px;background:#a0a0a0"></div>
<div class="abs" style="left:886.7px;top:602px;width:1px;height:24px;background:#d2d2d2"></div>
<svg class="abs" style="left:485.5px;top:606.5px" width="15" height="15" viewBox="0 0 15 15"><g stroke="#a8a8a8" stroke-width="1.300" stroke-linecap="round"><path d="M7.500 1v3.500M7.500 10.500v3.500M1 7.500h3.500M10.500 7.500h3.500M2.900 2.900l2.500 2.500M9.600 9.600l2.500 2.500M2.900 12.100l2.500-2.500M9.600 5.400l2.500-2.500"/><path d="M5 1.500l1 3M9 10.500l1 3M1.500 10l3-1M10.500 6l3-1M1.500 5l3 1M10.500 9l3 1M5 13.500l1-3M9 4.500l1-3" stroke-width="1"/></g></svg>
<svg class="abs" style="left:753.5px;top:608px" width="6" height="11" viewBox="0 0 6 11"><path d="M.5 4l2.500-3.500 2.500 3.500zM.5 7l2.500 3.500 2.500-3.500z" fill="#4a4a4a"/></svg>
<svg class="abs" style="left:770px;top:607.5px" width="11" height="12" viewBox="0 0 11 12"><rect x="3.500" y="6" width="6.500" height="5" fill="#c8c8c8" stroke="#8e8e8e" stroke-width="1.400"/><path d="M1.500 6v-2.500a2 2 0 0 1 4 0" fill="none" stroke="#8e8e8e" stroke-width="1.400"/></svg>
<svg class="abs" style="left:791.5px;top:605px" width="18" height="17" viewBox="0 0 18 17"><rect x="1" y="1.500" width="4" height="13" rx="2" fill="#fff" stroke="#4a4a4a" stroke-width="1.200"/><path d="M3 4v7" stroke="#4a4a4a"/><circle cx="12" cy="5" r="2.500" fill="#fff" stroke="#4a4a4a" stroke-width="1.200"/><path d="M8.500 12.500c0-3 7-3 7 0v2h-7z" fill="#fff" stroke="#4a4a4a" stroke-width="1.200"/><path d="M12 1v2M12 7.500v7" stroke="#4a4a4a"/></svg>
<svg class="abs" style="left:817.5px;top:607px" width="14" height="14" viewBox="0 0 14 14"><path d="M7 .5l6.500 6.500-6.500 6.500-6.500-6.500z" fill="#c6c6c6" stroke="#a6a6a6"/><text x="7" y="9.800" font-size="7.500" font-family="Liberation Sans, sans-serif" font-weight="bold" text-anchor="middle" fill="#6a6a6a">T</text></svg>
<span class="t " style="left:833.7px;top:609px;font-size:11px;font-weight:normal;color:#111;letter-spacing:-0.291px;">:OFF</span>
<svg class="abs" style="left:865px;top:607px" width="14" height="13" viewBox="0 0 14 13"><path d="M1 .5h12v8h-6.500l-3 3v-3h-2.500z" fill="#a4a4a4"/></svg>
<div class="abs" style="left:889.5px;top:606px;width:93px;height:16px;background:#f2f2f2;border:1px solid #a4a4a4"></div>
<div class="abs" style="left:890.5px;top:607px;width:85px;height:14px;background:#d8d8d8"></div>
<div class="abs" style="left:890.5px;top:607px;width:17px;height:14px;background:#a6a6a6"></div>
<span class="t " style="left:894.4px;top:608.3px;font-size:12px;font-weight:normal;color:#000;letter-spacing:0.024px;">215M of 1074M</span>
<div class="abs" style="left:986px;top:76px;width:1px;height:524px;background:#9a9a9a"></div>
</body></html>
